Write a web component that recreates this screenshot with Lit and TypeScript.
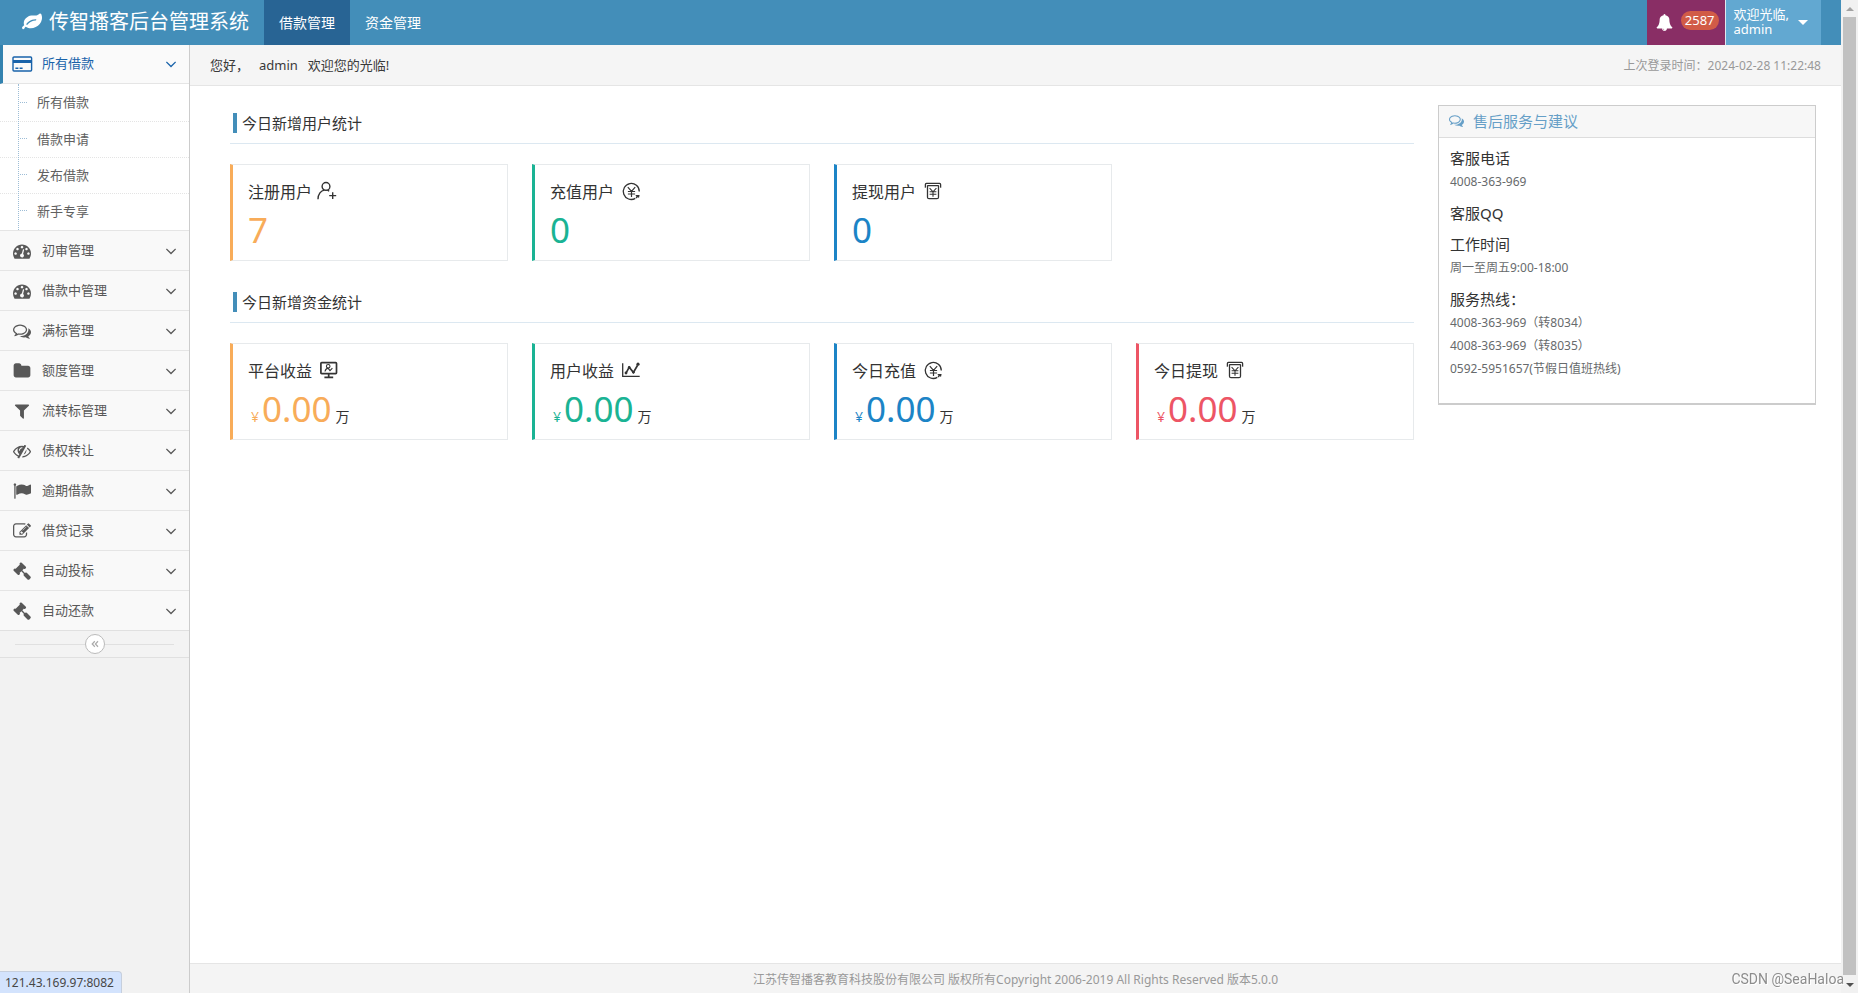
import { LitElement, html, css, svg, nothing } from "lit";
import { customElement, property } from "lit/decorators.js";
import { classMap } from "lit/directives/class-map.js";

/* Glyphs on a 1792-unit em square. */
const GLYPHS: Record<string, string> = {
  leaf: "M1280 704q0-26-19-45t-45-19q-172 0-318 49.5t-259.5 134-235.5 219.5q-19 21-19 45 0 26 19 45t45 19q24 0 45-19 27-24 74-71t67-66q137-124 268.5-176t313.5-52q26 0 45-19t19-45zm512-198q0 95-20 193-46 224-184.5 383t-357.5 268q-214 108-438 108-148 0-286-47-15-5-88-42t-96-37q-16 0-39.5 32t-45 70-52.5 70-60 32q-43 0-63.5-17.5t-45.5-59.5q-2-4-6-11t-5.5-10-3-9.5-1.5-13.5q0-35 31-73.5t68-65.5 68-56 31-48q0-4-14-38t-16-44q-9-51-9-104 0-115 43.5-220t119-184.5 170.5-139 204-95.5q55-18 145-25.5t179.5-9 178.5-6 163.5-24 113.5-56.5l29.5-29.5 29.5-28 27-20 36.5-16 43.5-4.5q39 0 70.5 46t47.5 112 24 124 8 96z",
  gauge: "M384 1152q0-53-37.5-90.5t-90.5-37.5-90.5 37.5-37.5 90.5 37.5 90.5 90.5 37.5 90.5-37.5 37.5-90.5zm192-448q0-53-37.5-90.5t-90.5-37.5-90.5 37.5-37.5 90.5 37.5 90.5 90.5 37.5 90.5-37.5 37.5-90.5zm428 481l101-382q6-26-7.5-48.5t-38.5-29.5-48 6.5-30 39.5l-101 382q-60 5-107 43.5t-63 98.5q-20 77 20 146t117 89 146-20 89-117q16-60-6-117t-72-91zm660-33q0-53-37.5-90.5t-90.5-37.5-90.5 37.5-37.5 90.5 37.5 90.5 90.5 37.5 90.5-37.5 37.5-90.5zm-640-640q0-53-37.5-90.5t-90.5-37.5-90.5 37.5-37.5 90.5 37.5 90.5 90.5 37.5 90.5-37.5 37.5-90.5zm448 192q0-53-37.5-90.5t-90.5-37.5-90.5 37.5-37.5 90.5 37.5 90.5 90.5 37.5 90.5-37.5 37.5-90.5zm320 448q0 261-141 483-19 29-54 29h-1402q-35 0-54-29-141-221-141-483 0-182 71-348t191-286 286-191 348-71 348 71 286 191 191 286 71 348z",
  comments: "M704 384q-153 0-286 52t-211.5 141-78.5 191q0 82 53 158t149 132l97 56-35 84q34-20 62-39l44-31 53 10q78 14 153 14 153 0 286-52t211.5-141 78.5-191-78.5-191-211.5-141-286-52zm0-128q191 0 353.5 68.5t256.5 186.5 94 257-94 257-256.5 186.5-353.5 68.5q-86 0-176-16-124 88-278 128-36 9-86 16h-3q-11 0-20.5-8t-11.5-21q-1-3-1-6.5t.5-6.5 2-6l2.5-5 3.5-5.5 4-5 4.5-5 4-4.5q5-6 23-25t26-29.5 22.5-29 25-38.5 20.5-44q-124-72-195-177t-71-224q0-139 94-257t256.5-186.5 353.5-68.5zm822 1169q10 24 20.5 44t25 38.5 22.5 29 26 29.5 23 25q1 1 4 4.5t4.5 5 4 5 3.5 5.5l2.5 5 2 6 .5 6.5-1 6.5q-3 14-13 22t-22 7q-50-7-86-16-154-40-278-128-90 16-176 16-271 0-472-132 58 4 88 4 161 0 309-45t264-129q125-92 192-212t67-254q0-77-23-152 129 71 204 178t75 230q0 120-71 224.5t-195 176.5z",
  folder: "M1728 608v704q0 92-66 158t-158 66h-1216q-92 0-158-66t-66-158v-960q0-92 66-158t158-66h320q92 0 158 66t66 158v32h672q92 0 158 66t66 158z",
  filter: "M1595 295q17 41-14 70l-493 493v742q0 42-39 59-13 5-25 5-27 0-45-19l-256-256q-19-19-19-45v-486l-493-493q-31-29-14-70 17-39 59-39h1280q42 0 59 39z",
  eyeSlash: "M555 1335l78-141q-87-63-136-159t-49-203q0-121 61-225-229 117-381 353 167 258 427 375zm389-759q0-20-14-34t-34-14q-125 0-214.5 89.5t-89.5 214.5q0 20 14 34t34 14 34-14 14-34q0-86 61-147t147-61q20 0 34-14t14-34zm363-191q0 7-1 9-106 189-316 567t-315 566l-49 89q-10 16-28 16-12 0-134-70-16-10-16-28 0-12 44-87-143-65-263.5-173t-208.5-245q-20-31-20-69t20-69q153-235 380-371t496-136q89 0 180 17l54-97q10-16 28-16 5 0 18 6t31 15.5 33 18.5 31.5 18.5 19.5 11.5q16 10 16 27zm37 447q0 139-79 253.5t-209 164.5l280-502q8 45 8 84zm448 128q0 35-20 69-39 64-109 145-150 172-347.5 267t-419.5 95l74-132q212-18 392.5-137t301.5-307q-115-179-282-294l63-112q95 64 182.5 153t144.5 184q20 34 20 69z",
  flag: "M320 256q0 72-64 110v1266q0 13-9.5 22.5t-22.5 9.5h-64q-13 0-22.5-9.5t-9.5-22.5v-1266q-64-38-64-110 0-53 37.5-90.5t90.5-37.5 90.5 37.5 37.5 90.5zm1472 64v763q0 25-12.5 38.5t-39.5 27.5q-215 116-369 116-61 0-123.5-22t-108.5-48-115.5-48-142.5-22q-192 0-464 146-17 9-33 9-26 0-45-19t-19-45v-742q0-32 31-55 21-14 79-43 236-120 421-120 107 0 200 29t219 88q38 19 88 19 54 0 117.5-21t110-47 88-47 54.5-21q26 0 45 19t19 45z",
  edit: "M888 1184l116-116-152-152-116 116v56h96v96h56zm440-720q-16-16-33 1l-350 350q-17 17-1 33t33-1l350-350q17-17 1-33zm80 594v190q0 119-84.5 203.5t-203.5 84.5h-832q-119 0-203.5-84.5t-84.5-203.5v-832q0-119 84.5-203.5t203.5-84.5h832q63 0 117 25 15 7 18 23 3 17-9 29l-49 49q-14 14-32 8-23-6-45-6h-832q-66 0-113 47t-47 113v832q0 66 47 113t113 47h832q66 0 113-47t47-113v-126q0-13 9-22l64-64q15-15 35-7t20 29zm-96-738l288 288-672 672h-288v-288zm444 132l-92 92-288-288 92-92q28-28 68-28t68 28l152 152q28 28 28 68t-28 68z",
  gavel: "M1771 1536q0 53-37 90l-107 108q-39 37-91 37-53 0-90-37l-363-364q-38-36-38-90 0-53 43-96l-256-256-126 126q-14 14-34 14t-34-14q2 2 12.5 12t12.5 13 10 11.5 10 13.5 6 13.5 5.5 16.5 1.5 18q0 38-28 68-3 3-16.5 18t-19 20.5-18.5 16.5-22 15.5-22 9-26 4.5q-40 0-68-28l-408-408q-28-28-28-68 0-13 4.5-26t9-22 15.5-22 16.5-18.5 20.5-19 18-16.5q30-28 68-28 10 0 18 1.5t16.5 5.5 13.5 6 13.5 10 11.5 10 13 12.5 12 12.5q-14-14-14-34t14-34l348-348q14-14 34-14t34 14q-2-2-12.5-12t-12.5-13-10-11.5-10-13.5-6-13.5-5.5-16.5-1.5-18q0-38 28-68 3-3 16.5-18t19-20.5 18.5-16.5 22-15.5 22-9 26-4.5q40 0 68 28l408 408q28 28 28 68 0 13-4.5 26t-9 22-15.5 22-16.5 18.5-20.5 19-18 16.5q-30 28-68 28-10 0-18-1.5t-16.5-5.5-13.5-6-13.5-10-11.5-10-13-12.5-12-12.5q14 14 14 34t-14 34l-126 126 256 256q43-43 96-43 52 0 91 37l363 363q37 39 37 91z",
  bell: "M912 1696q0-16-16-16-59 0-101.5-42.5t-42.5-101.5q0-16-16-16t-16 16q0 73 51.5 124.5t124.5 51.5q16 0 16-16zm816-288q0 52-38 90t-90 38h-448q0 106-75 181t-181 75-181-75-75-181h-448q-52 0-90-38t-38-90q50-42 91-88t85-119.5 74.5-158.5 50-206 19.5-260q0-152 117-282.5t307-158.5q-8-19-8-39 0-40 28-68t68-28 68 28 28 68q0 20-8 39 190 28 307 158.5t117 282.5q0 139 19.5 260t50 206 74.5 158.5 85 119.5 91 88z",
  angleDown: "M1395 736q0 13-10 23l-466 466q-10 10-23 10t-23-10l-466-466q-10-10-10-23t10-23l50-50q10-10 23-10t23 10l393 393 393-393q10-10 23-10t23 10l50 50q10 10 10 23z",
};

/* Line icons on a 20-unit grid. */
const LINES: Record<string, unknown> = {
  card: svg`<rect x="1" y="3" width="18.6" height="14" rx="1" /><path d="M1 7.5h18.6" stroke-width="3" /><path d="M3.4 14.2h3M7.6 14.2h3" />`,
  userPlus: svg`<g transform="translate(-2 -1)"><circle cx="9" cy="5.4" r="3.9" /><path d="M1 18.2C1 13 4 9.6 7.4 9.1M10.4 9.2l1.8.9M12.2 14.6h7M15.7 11.2v6.8" /></g>`,
  recharge: svg`<path d="M18.3 9.4A8 8 0 1 0 14.3 16.4" stroke-width="1.3" /><path d="M6.8 5.2l3.7 4.2 3.7-4.2M10.5 9.4v5.6M6.9 9.5h7.2M6.9 12h7.2" stroke-width="1.2" /><path d="M14.2 12.9h4.4l-.6 3-1.2-1-1 1.5-1.2-.9.9-1.3z" fill="currentColor" stroke="none" />`,
  withdraw: svg`<path d="M2.9 5H2.4V2.4q0-1 1-1h13.2q1 0 1 1V5h-.5M4.2 3.6h11.6M4.5 3.8v11.4q0 1.5 1.5 1.5h8q1.5 0 1.5-1.5V3.8" stroke-width="1.3" /><path d="M6.6 6.2 10 9.8l3.4-3.6M10 9.8v5M6.6 9.8h6.8M6.6 12.2h6.8" stroke-width="1.1" />`,
  monitor: svg`<rect x="1.9" y="1.6" width="15.6" height="11" rx=".8" stroke-width="1.7" /><path d="M9.7 13v2.6M5.4 16.4h8.8" stroke-width="1.7" /><circle cx="9.2" cy="5.3" r="1.8" stroke-width="1.1" /><path d="M6 10.5q.6-3 3-3.4l2 2.6 2.4-2.6" stroke-width="1.1" />`,
  chart: svg`<path d="M1.7 2.2v13.2h17" stroke-width="1.3" /><path d="m5 12.2 3.2-6 4.2 5.2 4.2-7.2" stroke-width="1.7" /><circle cx="17" cy="3.2" r="1.6" fill="currentColor" stroke="none" /><circle cx="5" cy="12" r="1.4" fill="currentColor" stroke="none" /><circle cx="8.2" cy="6.2" r="1.3" fill="currentColor" stroke="none" /><circle cx="12.4" cy="11.2" r="1.3" fill="currentColor" stroke="none" />`,
  doubleLeft: svg`<path d="M9.6 4.5 4.4 10l5.2 5.5M16 4.5 10.8 10l5.2 5.5" stroke-width="2.4" />`,
};

@customElement("ui-icon")
class UiIcon extends LitElement {
  @property() name = "";

  static styles = css`
    :host {
      display: inline-flex;
      flex: none;
      width: 18px;
      height: 18px;
    }
    .art {
      width: 100%;
      height: 100%;
      overflow: visible;
    }
  `;

  render() {
    const glyph = GLYPHS[this.name];
    return glyph
      ? html`<svg class="art" viewBox="0 0 1792 1792" fill="currentColor" aria-hidden="true"><path d=${glyph} /></svg>`
      : html`<svg class="art" viewBox="0 0 20 20" fill="none" stroke="currentColor" stroke-width="1.4" aria-hidden="true">${LINES[this.name]}</svg>`;
  }
}

interface Stat {
  label: string;
  icon: string;
  tone: string;
  value: string;
  money?: boolean;
}

@customElement("stat-card")
class StatCard extends LitElement {
  @property({ attribute: false }) stat!: Stat;

  static styles = css`
    :host {
      display: block;
    }
    .card {
      border: 1px solid #e7eaec;
      border-left: 3px solid var(--tone);
      padding: 16px 15px 10px;
    }
    .orange { --tone: #f8ac59; }
    .green { --tone: #1ab394; }
    .blue { --tone: #1c84c6; }
    .red { --tone: #ed5565; }
    .label {
      display: flex;
      align-items: center;
      gap: 7px;
      font-size: 16px;
      line-height: 22px;
      margin: 0;
      font-weight: 400;
      color: #333;
    }
    .icon {
      width: 20px;
      height: 20px;
    }
    .value {
      margin: 7px 0 0;
      display: flex;
      align-items: baseline;
      line-height: 40px;
      height: 40px;
      color: var(--tone);
      font-size: 35px;
    }
    .sign {
      font-size: 14px;
      width: 8px;
      margin: 0 3px;
    }
    .unit {
      font-size: 14px;
      color: #333;
      margin-left: 4px;
    }
  `;

  render() {
    const s = this.stat;
    return html`
      <article class=${classMap({ card: true, [s.tone]: true })}>
        <h3 class="label">${s.label}<ui-icon class="icon" name=${s.icon}></ui-icon></h3>
        <p class="value">
          ${s.money ? html`<span class="sign">¥</span>` : nothing}<span>${s.value}</span>${s.money
            ? html`<span class="unit">万</span>`
            : nothing}
        </p>
      </article>
    `;
  }
}

const SUBMENU = ["所有借款", "借款申请", "发布借款", "新手专享"];

const MENU = [
  { label: "初审管理", icon: "gauge" },
  { label: "借款中管理", icon: "gauge" },
  { label: "满标管理", icon: "comments" },
  { label: "额度管理", icon: "folder" },
  { label: "流转标管理", icon: "filter" },
  { label: "债权转让", icon: "eyeSlash" },
  { label: "逾期借款", icon: "flag" },
  { label: "借贷记录", icon: "edit" },
  { label: "自动投标", icon: "gavel" },
  { label: "自动还款", icon: "gavel" },
];

const SECTIONS: { title: string; stats: Stat[] }[] = [
  {
    title: "今日新增用户统计",
    stats: [
      { label: "注册用户", icon: "userPlus", tone: "orange", value: "7" },
      { label: "充值用户", icon: "recharge", tone: "green", value: "0" },
      { label: "提现用户", icon: "withdraw", tone: "blue", value: "0" },
    ],
  },
  {
    title: "今日新增资金统计",
    stats: [
      { label: "平台收益", icon: "monitor", tone: "orange", value: "0.00", money: true },
      { label: "用户收益", icon: "chart", tone: "green", value: "0.00", money: true },
      { label: "今日充值", icon: "recharge", tone: "blue", value: "0.00", money: true },
      { label: "今日提现", icon: "withdraw", tone: "red", value: "0.00", money: true },
    ],
  },
];

const CONTACTS = [
  { title: "客服电话", lines: ["4008-363-969"] },
  { title: "客服QQ", lines: [] },
  { title: "工作时间", lines: ["周一至周五9:00-18:00"] },
  { title: "服务热线：", lines: ["4008-363-969（转8034）", "4008-363-969（转8035）", "0592-5951657(节假日值班热线)"] },
];

@customElement("app-root")
class AppRoot extends LitElement {
  static styles = css`
    :host {
      display: grid;
      grid-template-columns: minmax(0, 1fr) 17px;
      min-height: 100vh;
      font-family: "Noto Sans", "Noto Sans CJK SC", sans-serif;
      font-size: 13px;
      line-height: 20px;
      color: #393939;
      background: #fff;
    }
    * {
      box-sizing: border-box;
    }
    a {
      color: inherit;
      text-decoration: none;
    }
    ul {
      list-style: none;
      margin: 0;
      padding: 0;
    }
    .page {
      display: grid;
      grid-template: 45px 1fr / 190px minmax(0, 1fr);
    }

    .topbar {
      grid-column: 1 / -1;
      display: flex;
      align-items: stretch;
      background: #438eb9;
      color: #fff;
      padding-right: 20px;
    }
    .brand {
      display: flex;
      align-items: center;
      gap: 7px;
      padding: 0 15px 2px 22px;
      font-size: 20px;
      font-weight: 400;
      margin: 0;
    }
    .leaf {
      width: 20px;
      height: 20px;
    }
    .tabs {
      display: flex;
    }
    .tab {
      display: flex;
      align-items: center;
      padding: 0 15px;
      font-size: 14px;
    }
    .tab.current {
      background: #286494;
    }
    .tools {
      margin-left: auto;
      display: flex;
    }
    .alerts {
      display: flex;
      align-items: center;
      gap: 8px;
      border: 0;
      font: inherit;
      padding: 0 6px 0 9px;
      background: #892e65;
      color: #fff;
    }
    .bell {
      width: 17px;
      height: 17px;
    }
    .badge {
      align-self: flex-start;
      margin-top: 11px;
      background: #d15b47;
      border-radius: 10px;
      line-height: 19px;
      padding: 0 4px;
    }
    .account {
      display: flex;
      align-items: center;
      gap: 9px;
      border: 0;
      border-left: 1px solid #e1e9ef;
      font: inherit;
      line-height: 15px;
      text-align: left;
      background: #62a8d1;
      color: #fff;
      padding: 0 13px 0 8px;
    }
    .welcome {
      padding-bottom: 2px;
    }
    .caret {
      border: 5px solid transparent;
      border-top-color: #fff;
      border-bottom: 0;
    }

    .sidebar {
      background: #f2f2f2;
      border-right: 1px solid #ccc;
      color: #585858;
    }
    .entry {
      display: flex;
      align-items: center;
      height: 40px;
      padding: 0 9px 0 13px;
      border-top: 1px solid #e5e5e5;
      background: #f9f9f9;
    }
    .entry.open {
      height: 39px;
      padding-left: 9px;
      border-top: 0;
      border-bottom: 1px solid #e5e5e5;
      border-left: 3px solid #3382af;
      background: #fafafa;
      color: #1963aa;
    }
    .entry-icon {
      margin-right: 11px;
    }
    .entry.open .entry-icon {
      width: 20px;
      height: 20px;
      margin-right: 10px;
    }
    .entry-text {
      padding-bottom: 2px;
    }
    .entry-caret {
      margin-left: auto;
    }
    .entry.open .entry-caret {
      margin-bottom: 1px;
    }
    .submenu {
      position: relative;
      background: #fff;
      color: #616161;
      padding: 1px 0;
    }
    .submenu::before {
      content: "";
      position: absolute;
      top: 0;
      bottom: 0;
      left: 18px;
      border-left: 1px dotted #9dbdd6;
    }
    .subitem {
      display: flex;
      align-items: center;
      gap: 10px;
      height: 36px;
      padding: 0 0 2px 20px;
    }
    .subitem::before {
      content: "";
      width: 7px;
      border-top: 1px dotted #9dbdd6;
    }
    .subrow + .subrow {
      border-top: 1px dotted #e4e4e4;
    }
    .subrow + .subrow .subitem {
      height: 35px;
    }
    .collapse {
      display: flex;
      align-items: center;
      height: 28px;
      padding: 0 15px;
      border: solid #e0e0e0;
      border-width: 1px 0;
      background: #f3f3f3;
    }
    .collapse::before,
    .collapse::after {
      content: "";
      flex: 1;
      border-top: 1px solid #e0e0e0;
    }
    .collapse-button {
      display: flex;
      align-items: center;
      justify-content: center;
      width: 20px;
      height: 20px;
      padding: 0;
      border: 1px solid #bbb;
      border-radius: 50%;
      background: #fff;
      color: #aaa;
    }
    .collapse-icon {
      width: 10px;
      height: 10px;
    }

    .content {
      display: flex;
      flex-direction: column;
      min-width: 0;
    }
    .crumbs {
      display: flex;
      justify-content: space-between;
      align-items: center;
      height: 41px;
      padding: 0 20px;
      background: #f5f5f5;
      border-bottom: 1px solid #e5e5e5;
    }
    .greeting {
      display: flex;
      gap: 10px;
    }
    .last-login {
      padding-top: 1px;
      font-size: 12px;
      color: #999;
    }
    .main {
      flex: 1;
      display: grid;
      grid-template-columns: minmax(0, 1fr) 378px;
      align-items: start;
      gap: 24px;
      padding: 19px 25px 20px 40px;
    }
    .stats {
      padding-top: 8px;
    }
    .section + .section {
      margin-top: 31px;
    }
    .section-title {
      display: flex;
      align-items: center;
      gap: 5px;
      margin: 0 0 20px;
      padding: 0 0 10px 3px;
      border-bottom: 1px solid #dce8f1;
      font-size: 15px;
      font-weight: 400;
      color: #333;
    }
    .section-title::before {
      content: "";
      width: 4px;
      height: 20px;
      background: #438eb9;
    }
    .cards {
      display: grid;
      grid-template-columns: repeat(4, minmax(0, 1fr));
      gap: 24px;
    }
    .panel {
      border: 1px solid #ccc;
      border-bottom-width: 2px;
    }
    .panel-title {
      display: flex;
      align-items: center;
      gap: 9px;
      height: 32px;
      margin: 0;
      padding: 0 10px 2px;
      border-bottom: 1px solid #ddd;
      background: #f7f7f7;
      color: #669fc7;
      font-size: 15px;
      font-weight: 400;
    }
    .panel-icon {
      width: 15px;
      height: 15px;
    }
    .panel-body {
      display: grid;
      gap: 8px;
      padding: 9px 11px 22px;
      line-height: 23px;
    }
    .contact-title {
      margin: 0;
      font-size: 15px;
      font-weight: 400;
      color: #333;
    }
    .contact-line {
      margin: 0;
      font-size: 12px;
      color: #676a6c;
    }
    .contact-line:last-child {
      padding-bottom: 1px;
    }
    .footer {
      height: 30px;
      border-top: 1px solid #e5e5e5;
      background: #f4f4f4;
      color: #999;
      font-size: 12px;
      line-height: 31px;
      text-align: center;
    }

    .scrollbar {
      display: flex;
      flex-direction: column;
      align-items: center;
      justify-content: space-between;
      padding: 7px 2px 6px;
      background: #f1f1f1;
    }
    .arrow {
      border: 4px solid transparent;
    }
    .arrow.up {
      border-top: 0;
      border-bottom-color: #a3a3a3;
    }
    .arrow.down {
      border-bottom: 0;
      border-top-color: #505050;
    }
    .thumb {
      flex: 1;
      width: 100%;
      margin: 6px 0 8px;
      background: #c1c1c1;
    }
    .link-status {
      position: fixed;
      left: 0;
      bottom: 0;
      padding: 1px 7px 0 5px;
      border: solid #c6cfdd;
      border-width: 1px 1px 0 0;
      border-radius: 0 4px 0 0;
      background: #d3e3fd;
      color: #474747;
      font-size: 12px;
    }
    .watermark {
      position: fixed;
      right: 14px;
      bottom: 4px;
      font-family: Roboto, sans-serif;
      font-size: 14px;
      color: #8c8c8c;
      text-shadow: 1px 1px 0 #fff;
    }
  `;

  render() {
    return html`
      <div class="page">
        <header class="topbar">
          <h1 class="brand"><ui-icon class="leaf" name="leaf"></ui-icon>传智播客后台管理系统</h1>
          <nav class="tabs">
            <a class="tab current" href="#loan">借款管理</a>
            <a class="tab" href="#fund">资金管理</a>
          </nav>
          <div class="tools">
            <button class="alerts" type="button">
              <ui-icon class="bell" name="bell"></ui-icon><span class="badge">2587</span>
            </button>
            <button class="account" type="button">
              <span class="welcome">欢迎光临,<br />admin</span><span class="caret"></span>
            </button>
          </div>
        </header>

        <nav class="sidebar">
          <a class="entry open" href="#all">
            <ui-icon class="entry-icon" name="card"></ui-icon>
            <span class="entry-text">所有借款</span>
            <ui-icon class="entry-caret" name="angleDown"></ui-icon>
          </a>
          <ul class="submenu">
            ${SUBMENU.map((label) => html`<li class="subrow"><a class="subitem" href="#sub">${label}</a></li>`)}
          </ul>
          ${MENU.map(
            (m) => html`
              <a class="entry" href="#menu">
                <ui-icon class="entry-icon" name=${m.icon}></ui-icon>
                <span class="entry-text">${m.label}</span>
                <ui-icon class="entry-caret" name="angleDown"></ui-icon>
              </a>
            `,
          )}
          <div class="collapse">
            <button class="collapse-button" type="button" aria-label="收起菜单">
              <ui-icon class="collapse-icon" name="doubleLeft"></ui-icon>
            </button>
          </div>
        </nav>

        <div class="content">
          <div class="crumbs">
            <div class="greeting"><span>您好，</span><span>admin</span><span>欢迎您的光临!</span></div>
            <div class="last-login">上次登录时间：2024-02-28 11:22:48</div>
          </div>
          <main class="main">
            <div class="stats">
              ${SECTIONS.map(
                (s) => html`
                  <section class="section">
                    <h2 class="section-title">${s.title}</h2>
                    <div class="cards">${s.stats.map((stat) => html`<stat-card .stat=${stat}></stat-card>`)}</div>
                  </section>
                `,
              )}
            </div>
            <aside class="panel">
              <h2 class="panel-title"><ui-icon class="panel-icon" name="comments"></ui-icon>售后服务与建议</h2>
              <div class="panel-body">
                ${CONTACTS.map(
                  (c) => html`
                    <section>
                      <h3 class="contact-title">${c.title}</h3>
                      ${c.lines.map((line) => html`<p class="contact-line">${line}</p>`)}
                    </section>
                  `,
                )}
              </div>
            </aside>
          </main>
          <footer class="footer">江苏传智播客教育科技股份有限公司 版权所有Copyright 2006-2019 All Rights Reserved 版本5.0.0</footer>
        </div>
      </div>
      <div class="scrollbar" aria-hidden="true">
        <span class="arrow up"></span><span class="thumb"></span><span class="arrow down"></span>
      </div>
      <div class="link-status">121.43.169.97:8082</div>
      <div class="watermark">CSDN @SeaHaloa</div>
    `;
  }
}
